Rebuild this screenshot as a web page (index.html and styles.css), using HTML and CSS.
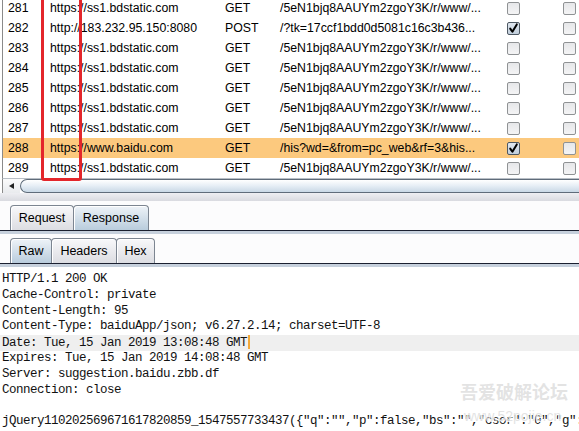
FILE: index.html
```html
<!DOCTYPE html>
<html>
<head>
<meta charset="utf-8">
<link rel="stylesheet" href="styles.css">
</head>
<body>
<div class="app">
  <div class="top">
    <div class="table">
      <div class="row"><span class="num">281</span><span>https://ss1.bdstatic.com</span><span>GET</span><span>/5eN1bjq8AAUYm2zgoY3K/r/www/...</span><span><i class="cb"></i></span><span><i class="cb"></i></span></div>
      <div class="row"><span class="num">282</span><span>http://183.232.95.150:8080</span><span>POST</span><span>/?tk=17ccf1bdd0d5081c16c3b436...</span><span><i class="cb on"><svg viewBox="0 0 13 13" width="13" height="13"><path d="M3.2 6.6 L5.4 9.8 L9.8 2.4" fill="none" stroke="#000" stroke-width="2" stroke-linecap="round" stroke-linejoin="round"/></svg></i></span><span><i class="cb"></i></span></div>
      <div class="row"><span class="num">283</span><span>https://ss1.bdstatic.com</span><span>GET</span><span>/5eN1bjq8AAUYm2zgoY3K/r/www/...</span><span><i class="cb"></i></span><span><i class="cb"></i></span></div>
      <div class="row"><span class="num">284</span><span>https://ss1.bdstatic.com</span><span>GET</span><span>/5eN1bjq8AAUYm2zgoY3K/r/www/...</span><span><i class="cb"></i></span><span><i class="cb"></i></span></div>
      <div class="row"><span class="num">285</span><span>https://ss1.bdstatic.com</span><span>GET</span><span>/5eN1bjq8AAUYm2zgoY3K/r/www/...</span><span><i class="cb"></i></span><span><i class="cb"></i></span></div>
      <div class="row"><span class="num">286</span><span>https://ss1.bdstatic.com</span><span>GET</span><span>/5eN1bjq8AAUYm2zgoY3K/r/www/...</span><span><i class="cb"></i></span><span><i class="cb"></i></span></div>
      <div class="row"><span class="num">287</span><span>https://ss1.bdstatic.com</span><span>GET</span><span>/5eN1bjq8AAUYm2zgoY3K/r/www/...</span><span><i class="cb"></i></span><span><i class="cb"></i></span></div>
      <div class="row sel"><span class="num">288</span><span>https://www.baidu.com</span><span>GET</span><span>/his?wd=&amp;from=pc_web&amp;rf=3&amp;his...</span><span><i class="cb on"><svg viewBox="0 0 13 13" width="13" height="13"><path d="M3.2 6.6 L5.4 9.8 L9.8 2.4" fill="none" stroke="#000" stroke-width="2" stroke-linecap="round" stroke-linejoin="round"/></svg></i></span><span><i class="cb"></i></span></div>
      <div class="row"><span class="num">289</span><span>https://ss1.bdstatic.com</span><span>GET</span><span>/5eN1bjq8AAUYm2zgoY3K/r/www/...</span><span><i class="cb"></i></span><span><i class="cb"></i></span></div>
    </div>
    <div class="hscroll">
      <div class="sb-btn"><i class="tri"></i></div>
      <div class="sb-thumb"></div>
    </div>
    <div class="redbox"></div>
  </div>
  <div class="gap"></div>
  <div class="tabs">
    <div class="tab w-req">Request</div>
    <div class="tab active w-resp">Response</div>
  </div>
  <div class="tabline"></div>
  <div class="tabs">
    <div class="tab active w-raw">Raw</div>
    <div class="tab w-hdr">Headers</div>
    <div class="tab w-hex">Hex</div>
  </div>
  <div class="tabline"></div>
  <div class="raw">
    <div class="ln">HTTP/1.1 200 OK</div>
    <div class="ln">Cache-Control: private</div>
    <div class="ln">Content-Length: 95</div>
    <div class="ln">Content-Type: baiduApp/json; v6.27.2.14; charset=UTF-8</div>
    <div class="ln cur">Date: Tue, 15 Jan 2019 13:08:48 GMT<i class="caret"></i></div>
    <div class="ln">Expires: Tue, 15 Jan 2019 14:08:48 GMT</div>
    <div class="ln">Server: suggestion.baidu.zbb.df</div>
    <div class="ln">Connection: close</div>
    <div class="ln"> </div>
    <div class="ln">jQuery110202569671617820859_1547557733437({"q":"","p":false,"bs":"","csor":"0","g":[]})</div>
  </div>
  <div class="watermark">
    <div class="wm-cn">吾爱破解论坛</div>
    <div class="wm-en">www.52pojie.cn</div>
  </div>
</div>
</body>
</html>
```
FILE: styles.css
```css
html, body {
  margin: 0;
  padding: 0;
  background: #fff;
}
body {
  width: 579px;
  height: 431px;
  overflow: hidden;
  font-family: "Liberation Sans", Arial, sans-serif;
  color: #000;
}
.app {
  position: relative;
  width: 579px;
  height: 431px;
  overflow: hidden;
}
.top {
  position: relative;
  margin-top: -2px;
}
.table {
  margin-left: 2px;
  border-left: 1px solid #8a8a8a;
  background: #fff;
}
.row {
  display: grid;
  grid-template-columns: 47px 175px 55px 227px 56px 1fr;
  height: 20px;
  align-items: center;
  font-size: 12.3px;
  line-height: 20px;
  white-space: nowrap;
  overflow: hidden;
}
.row > span {
  display: flex;
  align-items: center;
  height: 20px;
}
.row.sel {
  background: #fcc97e;
}
.num {
  padding-left: 5px;
}
.cb {
  display: block;
  width: 13px;
  height: 13px;
  box-sizing: border-box;
  border: 1px solid #8f9294;
  border-radius: 2px;
  background: linear-gradient(#e6e7e9, #f4f4f5);
  position: relative;
}
.cb.on {
  border-color: #4d5863;
  background: linear-gradient(#dfe6ee, #c2cfdc);
}
.cb svg {
  position: absolute;
  left: -1px;
  top: -1px;
}
.hscroll {
  display: flex;
  height: 15px;
  margin-left: 2px;
  border-left: 1px solid #8a8a8a;
  border-top: 1px solid #b9bfc6;
  box-sizing: border-box;
  background: #fff;
}
.sb-btn {
  width: 17px;
  display: flex;
  align-items: center;
  justify-content: center;
  background: linear-gradient(#fbfbfb, #e9ebee);
}
.tri {
  display: block;
  width: 0;
  height: 0;
  border-top: 3px solid transparent;
  border-bottom: 3px solid transparent;
  border-right: 5px solid #222;
}
.sb-thumb {
  flex: 1;
  border: 1px solid #5f6c7a;
  border-right: none;
  border-radius: 9px 0 0 9px;
  background: linear-gradient(#ffffff, #e8eff6 45%, #c9d8e6);
}
.redbox {
  position: absolute;
  left: 41px;
  top: -6px;
  width: 41px;
  height: 189px;
  box-sizing: border-box;
  border: 3px solid #e3262b;
  border-radius: 3px;
}
.gap {
  height: 8px;
  background: linear-gradient(#eeeef2, #d9dae0);
}
.tabs {
  height: 29px;
  display: flex;
  align-items: flex-end;
  padding-left: 10px;
  background: #fcfcfd;
}
.tab {
  height: 25px;
  box-sizing: border-box;
  border: 1px solid #7c8591;
  border-bottom: none;
  border-radius: 4px 4px 0 0;
  text-align: center;
  line-height: 24px;
  font-size: 12.5px;
  margin-right: -1px;
  background: linear-gradient(#f8f8fa, #dcdde2);
  box-shadow: inset 1px 1px 0 #ffffff;
}
.tab.active {
  background: linear-gradient(#eef3f8, #b9ccdc);
  position: relative;
}
.w-req { width: 64px; }
.w-resp { width: 76px; }
.w-raw { width: 42px; }
.w-hdr { width: 66px; }
.w-hex { width: 39px; }
.tabline {
  height: 4px;
  box-sizing: border-box;
  border-top: 1px solid #1b2030;
  background: #c6d0dc;
}
.raw {
  padding: 5px 0 0 0;
  font-family: "Liberation Mono", "Courier New", monospace;
  font-size: 12.5px;
  letter-spacing: -0.5px;
  line-height: 15.8px;
  color: #111;
}
.ln {
  height: 15.8px;
  padding-left: 2px;
  white-space: pre;
}
.ln.cur {
  background: #efefef;
}
.caret {
  display: inline-block;
  width: 2px;
  height: 14px;
  background: #f2a93a;
  vertical-align: -3px;
  margin-left: 1px;
}
.watermark {
  position: absolute;
  left: 460px;
  top: 380px;
  font-family: "Noto Sans CJK SC", sans-serif;
  color: rgba(215, 215, 215, 0.7);
  text-shadow: 1px 1px 0 rgba(255, 255, 255, 0.9);
  pointer-events: none;
}
.wm-cn {
  font-size: 18px;
  line-height: 22px;
  font-weight: 700;
}
.wm-en {
  font-family: "Liberation Sans", sans-serif;
  font-size: 14px;
  line-height: 16px;
  margin-left: 4px;
  margin-top: 6px;
}
```
